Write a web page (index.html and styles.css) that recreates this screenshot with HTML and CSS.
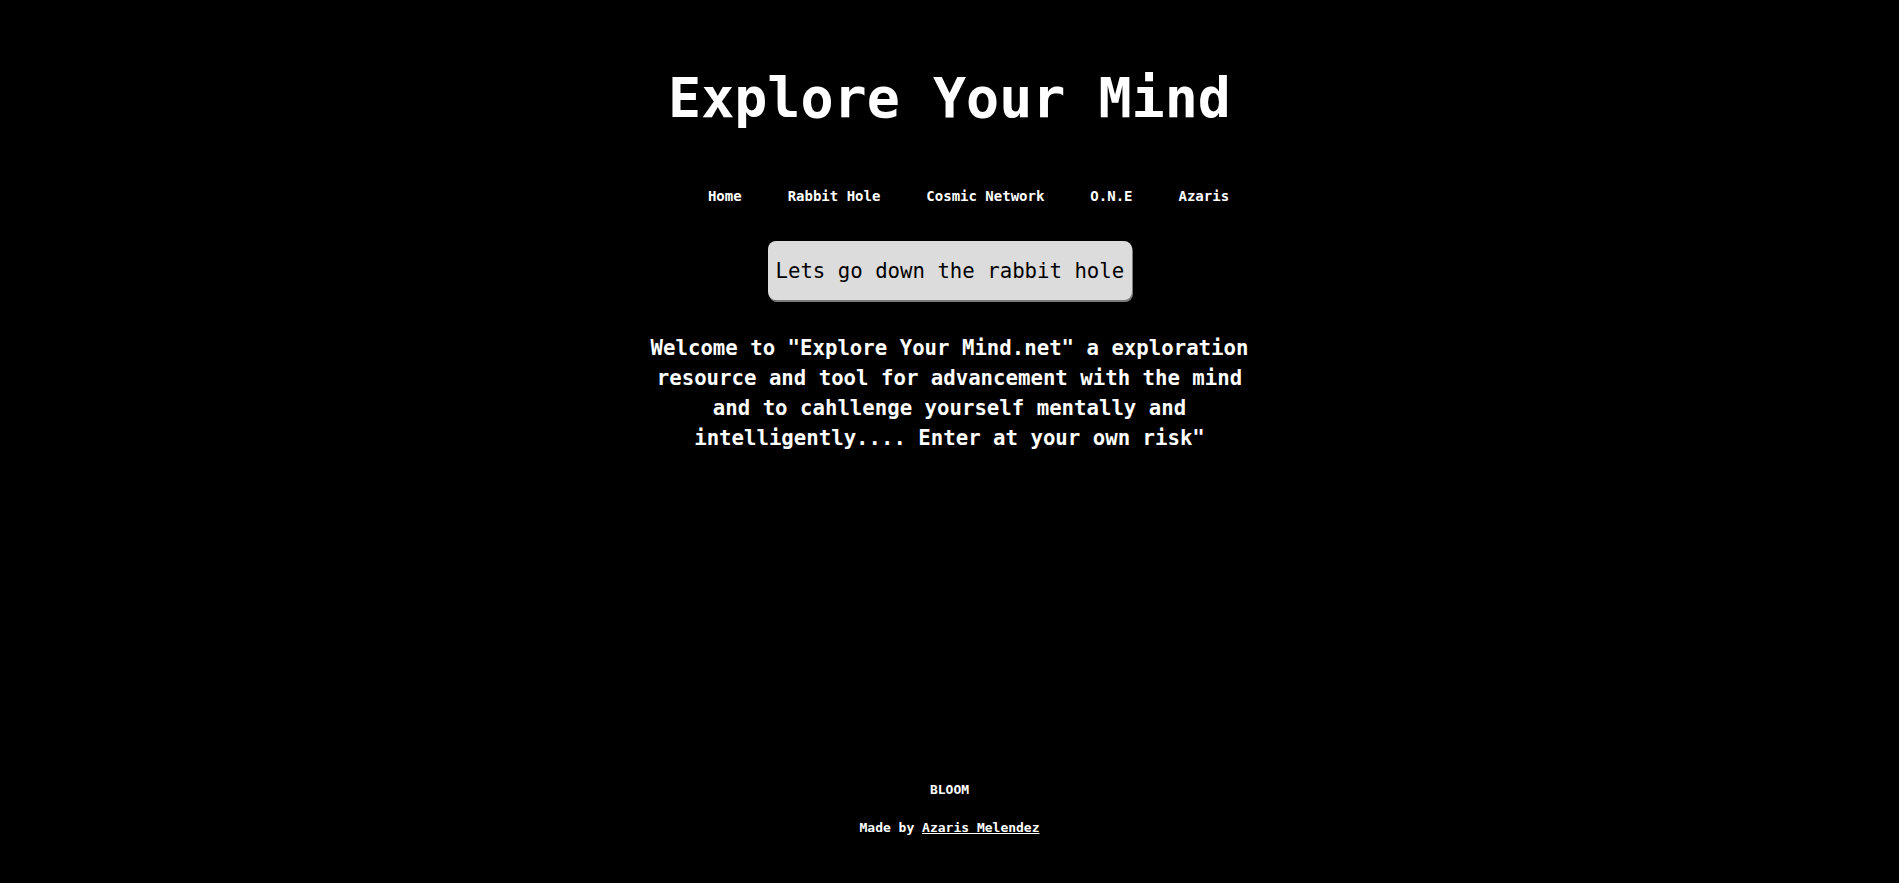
FILE: index.html
```html
<!DOCTYPE html>
<html>
<head>
<meta charset="utf-8">
<title>Explore Your Mind</title>
<link rel="stylesheet" href="styles.css">
</head>
<body>
<div class="page">
  <h1 class="title">Explore Your Mind</h1>
  <nav class="nav">
    <a href="#">Home</a>
    <a href="#">Rabbit Hole</a>
    <a href="#">Cosmic Network</a>
    <a href="#">O.N.E</a>
    <a href="#">Azaris</a>
  </nav>
  <button class="cta">Lets go down the rabbit hole</button>
  <p class="intro">Welcome to "Explore Your Mind.net" a exploration resource and tool for advancement with the mind and to cahllenge yourself mentally and intelligently.... Enter at your own risk"</p>
  <footer class="footer">
    <div class="brand">BLOOM</div>
    <div class="credit">Made by <a href="#">Azaris Melendez</a></div>
  </footer>
</div>
</body>
</html>
```
FILE: styles.css
```css
html, body {
  margin: 0;
  padding: 0;
  background: #000;
}
body {
  color: #fff;
  font-family: "DejaVu Sans Mono", "Liberation Mono", monospace;
  font-weight: bold;
}
.page {
  min-height: 100vh;
  display: flex;
  flex-direction: column;
  align-items: center;
  text-align: center;
  box-sizing: border-box;
  padding-bottom: 47px;
}
.title {
  margin: 66px 0 0 0;
  font-size: 55px;
  line-height: 64px;
  font-weight: bold;
}
.nav {
  margin-top: 58px;
  display: flex;
  gap: 46px;
  font-size: 14px;
  line-height: 16px;
  padding-left: 38px;
}
.nav a {
  color: #fff;
  text-decoration: none;
}
.cta {
  margin-top: 37px;
  width: 364px;
  height: 59px;
  padding: 0 8px;
  background: #dcdcdc;
  color: #000;
  font-family: "DejaVu Sans Mono", "Liberation Mono", monospace;
  font-weight: normal;
  font-size: 20.7px;
  border: none;
  border-radius: 8px;
  box-shadow: 1px 2px 0 #7a7a7a;
  white-space: nowrap;
}
.intro {
  margin: 33px 0 0 0;
  width: 620px;
  font-size: 20.7px;
  line-height: 30px;
}
.footer {
  margin-top: auto;
  font-size: 13px;
  line-height: 16px;
  display: flex;
  flex-direction: column;
  gap: 22px;
}
.credit a {
  color: #fff;
  text-decoration: underline;
}
```
